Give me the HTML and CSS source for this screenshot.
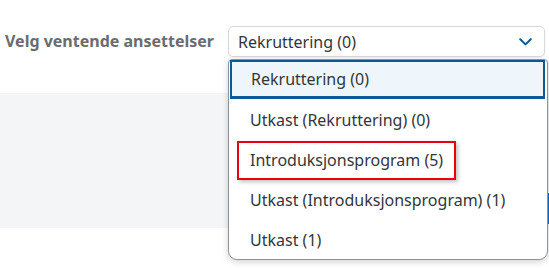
FILE: index.html
```html
<!DOCTYPE html>
<html lang="no">
<head>
<meta charset="utf-8">
<link rel="stylesheet" href="styles.css">
</head>
<body>
<div class="page">
  <div class="header">
    <label class="label">Velg ventende ansettelser</label>
    <div class="select-wrap">
      <div class="select">
        <span class="select-value">Rekruttering (0)</span>
        <svg class="chevron" width="13" height="8" viewBox="0 0 13 8"><path d="M1.2 1.2 L6.5 6.4 L11.8 1.2" fill="none" stroke="#0b5a96" stroke-width="2" stroke-linecap="round" stroke-linejoin="round"/></svg>
      </div>
      <div class="dropdown">
        <ul class="list">
          <li class="item selected">Rekruttering (0)</li>
          <li class="item">Utkast (Rekruttering) (0)</li>
          <li class="item">Introduksjonsprogram (5)</li>
          <li class="item">Utkast (Introduksjonsprogram) (1)</li>
          <li class="item">Utkast (1)</li>
        </ul>
        <div class="highlight"></div>
      </div>
    </div>
  </div>
  <div class="band">
    <div class="band-button"></div>
  </div>
</div>
</body>
</html>
```
FILE: styles.css
```css
* { box-sizing: border-box; }
html, body { margin: 0; padding: 0; background: #ffffff; }
body {
  font-family: "Noto Sans", "Liberation Sans", Arial, sans-serif;
  color: #32363a;
  width: 549px;
  height: 268px;
  overflow: hidden;
}
.page { display: flex; flex-direction: column; }
.header {
  height: 93px;
  display: flex;
  align-items: flex-start;
  padding-top: 26px;
}
.label {
  font-size: 16px;
  font-weight: bold;
  color: #6a6d70;
  margin-left: 5px;
  width: 223px;
  line-height: 31px;
  white-space: nowrap;
}
.select-wrap { position: relative; }
.select {
  width: 317px;
  height: 31px;
  border: 1px solid #d5d8dc;
  border-radius: 5px;
  background: #fff;
  display: flex;
  align-items: center;
  justify-content: space-between;
  padding: 0 12px 0 9px;
  box-shadow: 0 1px 2px rgba(0,0,0,0.06);
}
.select-value { font-size: 16px; color: #32363a; }
.chevron { display: block; margin-top: 1px; }
.dropdown {
  position: absolute;
  left: 0;
  top: 33px;
  width: 320px;
  height: 201px;
  background: #fff;
  border: 1px solid #8c9399;
  border-radius: 4px 4px 9px 9px;
  box-shadow: 0 2px 6px rgba(0,0,0,0.18);
  z-index: 5;
}
.list { list-style: none; margin: 0; padding: 0; }
.item {
  height: 40px;
  display: flex;
  align-items: center;
  padding-left: 21px;
  font-size: 16px;
  color: #32363a;
  white-space: nowrap;
}
.item.selected {
  height: 39px;
  margin: 0 2px 1px 1px;
  padding-left: 19px;
  background: #eff6fb;
  border: 2px solid #0b5a96;
  border-bottom-width: 3px;
}
.highlight {
  position: absolute;
  left: 8px;
  top: 81px;
  width: 219px;
  height: 39px;
  border: 2px solid #e8000b;
  box-shadow: 2px 2px 4px rgba(0,0,0,0.25);
}
.band {
  height: 135px;
  background: #f4f5f7;
  display: flex;
  justify-content: flex-end;
  align-items: flex-start;
  padding-top: 100px;
}
.band-button {
  width: 60px;
  height: 31px;
  background: #0a6ed1;
  border-radius: 3px 0 0 3px;
}
```
